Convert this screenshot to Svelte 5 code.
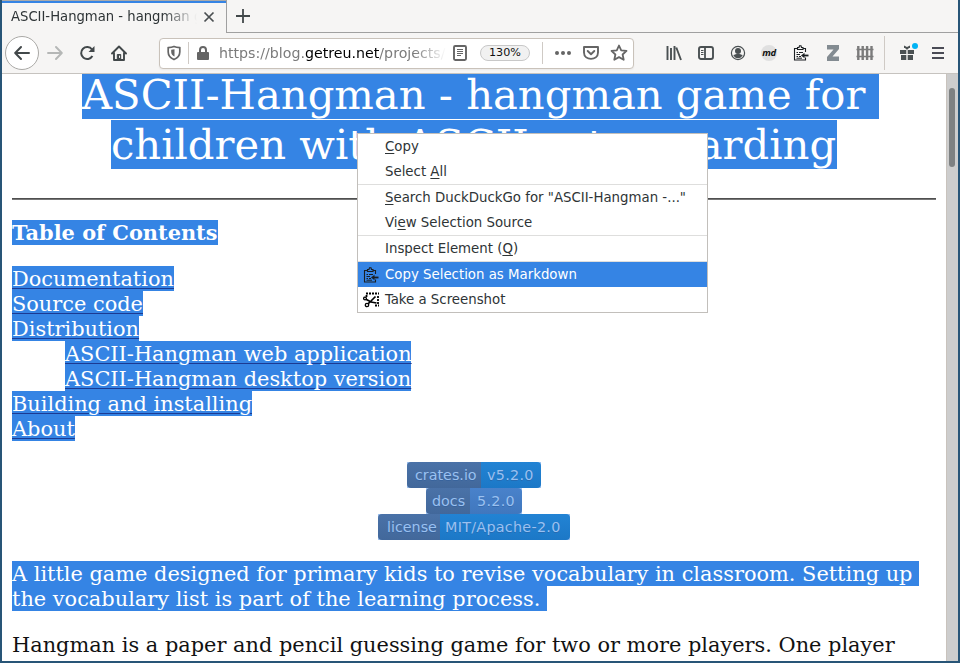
<script>
  const toc = [
    { text: 'Documentation', w: 162 },
    { text: 'Source code', w: 131 },
    { text: 'Distribution', w: 127 },
    { text: 'ASCII-Hangman web application', w: 346, sub: true },
    { text: 'ASCII-Hangman desktop version', w: 346, sub: true },
    { text: 'Building and installing', w: 240 },
    { text: 'About', w: 63 }
  ];
  const badges = [
    { left: 'crates.io', right: 'v5.2.0', lw: 74, rw: 60, kind: 'bright' },
    { left: 'docs', right: '5.2.0', lw: 44, rw: 52, kind: 'soft' },
    { left: 'license', right: 'MIT/Apache-2.0', lw: 62, rw: 130, kind: 'wide' }
  ];
</script>

{#snippet clipboard()}
  <svg width="16" height="16" viewBox="0 0 16 16" fill="none" stroke="#1b1f22" stroke-width="1.100">
    <path d="M12.500 7V3.500H10M4.500 3.500H1.500V15H12.500V12.500M4.500 4.500V2.500H6L6.500 .8H8L8.500 2.500H10V4.500Z" />
    <path d="M3.500 7.500H5M6 7.500H10M3.500 9.500H7M3.500 11.500H5M6 11.500H8M3.500 13.200H9" stroke-width="1" />
    <path d="M15.500 10.500H10" stroke-width="1.800" /><path d="M11.500 7.700L8 10.500L11.500 13.300Z" fill="#1b1f22" stroke="none" />
  </svg>
{/snippet}

<div class="window">
  <header>
    <div class="tabs">
      <div class="tab">
        <span class="title">ASCII-Hangman - hangman game for</span>
        <svg width="12" height="12" viewBox="0 0 12 12" stroke="#4a4f51" stroke-width="1.7"><path d="M1.500 1.500L10.500 10.500M10.500 1.500L1.500 10.500" /></svg>
      </div>
      <div class="rest">
        <svg width="14" height="14" viewBox="0 0 14 14" stroke="#42484a" stroke-width="1.800"><path d="M7 0V14M0 7H14" /></svg>
      </div>
    </div>

    <nav>
      <div class="back">
        <svg width="16" height="16" viewBox="0 0 16 16" fill="none" stroke="#42484a" stroke-width="2" stroke-linecap="round" stroke-linejoin="round"><path d="M15 8H1.500M7 2L1.200 8L7 14" /></svg>
      </div>
      <svg class="fwd" width="16" height="16" viewBox="0 0 16 16" fill="none" stroke="#b5b7b6" stroke-width="1.900" stroke-linecap="round" stroke-linejoin="round"><path d="M1 8H14.500M9 2L14.800 8L9 14" /></svg>
      <svg class="reload" width="16" height="16" viewBox="0 0 16 16" fill="none" stroke="#42484a" stroke-width="2"><path d="M13 4.500A6 6 0 1 0 13.400 11" /><path d="M15.500 1V7H9.500Z" fill="#42484a" stroke="none" /></svg>
      <svg class="home" width="16" height="16" viewBox="0 0 16 16" fill="none" stroke="#42484a" stroke-width="1.900" stroke-linejoin="round" stroke-linecap="round"><path d="M1 8.500L8 1.500L15 8.500M3 8V15H13V8" /><path d="M6.300 15V9.500H9.700V15" fill="#42484a" stroke-width="1" /><path d="M8.500 11V12.500" stroke="#f6f5f4" stroke-width="1" /></svg>

      <div class="url">
        <svg class="shield" width="14" height="16" viewBox="0 0 14 16"><path d="M7 1.500C9 2.200 11 2.500 12.800 2.700V7C12.800 10.500 10.500 13 7 14.500C3.500 13 1.200 10.500 1.200 7V2.700C3 2.500 5 2.200 7 1.500Z" fill="none" stroke="#656565" stroke-width="1.700" /><path d="M7.500 4.200L4.200 4.800V7C4.200 9 5.500 10.500 7.500 11.500Z" fill="#656565" /></svg>
        <i class="sep a"></i>
        <svg class="lock" width="14" height="16" viewBox="0 0 14 16"><rect x="1" y="7" width="12" height="8" rx="1" fill="#656565" /><path d="M4 8V5A3 3 0 0 1 10 5V8" fill="none" stroke="#656565" stroke-width="2" /></svg>
        <span class="address">https://blog.<b>getreu.net</b>/projects/ascii</span>
        <svg class="reader" width="14" height="16" viewBox="0 0 14 16" fill="none" stroke="#656565"><rect x="1" y="1" width="12" height="14" rx="1.200" stroke-width="1.900" /><path d="M4 4.500H10M4 6.500H10M4 8.500H10M4 10.500H8" /></svg>
        <span class="zoom">130%</span>
        <i class="sep b"></i>
        <svg class="dots" width="16" height="16" viewBox="0 0 16 16" fill="#656565"><circle cx="2" cy="8" r="2" /><circle cx="8" cy="8" r="2" /><circle cx="14" cy="8" r="2" /></svg>
        <svg class="pocket" width="16" height="16" viewBox="0 0 16 16" fill="none" stroke="#656565" stroke-width="1.900" stroke-linecap="round" stroke-linejoin="round"><path d="M1 2H15V7.500C15 16 1 16 1 7.500Z" /><path d="M4.700 6L8 9.200L11.300 6" /></svg>
        <svg class="star" width="18" height="18" viewBox="0 0 18 18" fill="none" stroke="#656565" stroke-width="1.800" stroke-linejoin="round"><path d="M9 1.500L11.200 6.300L16.500 6.900L12.600 10.500L13.700 15.800L9 13.100L4.300 15.800L5.400 10.500L1.500 6.900L6.800 6.300Z" /></svg>
      </div>

      <div class="tools">
        <svg class="lib" width="16" height="16" viewBox="0 0 16 16" fill="none" stroke="#4a5052" stroke-width="1.900"><path d="M1.500 1V15M5 3V15M8.500 1V15M10.300 2.500L15 15" /></svg>
        <svg class="side" width="16" height="16" viewBox="0 0 16 16" fill="none" stroke="#4a5052"><rect x="1" y="2" width="14" height="12" rx="2" stroke-width="1.900" /><path d="M7 2V14" stroke-width="1.800" /><path d="M3 5.500H5.500M3 7.500H5.500M3 9.500H5.500" /></svg>
        <svg class="acct" width="16" height="16" viewBox="0 0 16 16"><circle cx="8" cy="8" r="6.600" fill="none" stroke="#4a5052" stroke-width="1.200" /><circle cx="8" cy="6" r="3" fill="#4a5052" /><path d="M3.300 10C5 9.600 6 9 8 9S11 9.600 12.700 10C12 12 10 13.300 8 13.300S4 12 3.300 10Z" fill="#4a5052" /></svg>
        <span class="md">md</span>
        <span class="clip">{@render clipboard()}</span>
        <svg class="zed" width="14" height="16" viewBox="0 0 14 16"><path d="M1 0H13V4L6.500 11.500H13V16H1V12L7.500 4.500H1Z" fill="#838b91" /></svg>
        <svg class="fence" width="18" height="16" viewBox="0 0 18 16" fill="none" stroke="#7b7b7b" stroke-width="2.400"><path d="M2.300 1V15M6.700 1V15M11.100 1V15M15.500 1V15" /><path d="M.5 4.500H17.500M.5 11.500H17.500" stroke-width="1.500" /></svg>
        <i class="sep c"></i>
        <svg class="gift" width="20" height="20" viewBox="0 0 20 20"><path d="M2 8H8.300V12H2ZM9.700 8H16V12H9.700ZM3 13H8.300V18H3ZM9.700 13H15V18H9.700ZM6 3.500L9 5L12 3.500V6H11L9.500 7.500H8.500L7 6H6Z" fill="#4a5052" /><circle cx="17" cy="4" r="3" fill="#00b3f4" /></svg>
        <svg class="burger" width="12" height="14" viewBox="0 0 12 14" stroke="#4a4b55" stroke-width="2"><path d="M0 2H12M0 7H12M0 12H12" /></svg>
      </div>
    </nav>
  </header>

  <div class="view">
    <main>
      <h1><span class="l1">ASCII-Hangman - hangman game for </span><span class="l2">children with ASCII-art rewarding</span></h1>
      <hr />
      <h2><span>Table of Contents</span></h2>
      <ul>
        {#each toc as t}
          <li class:sub={t.sub}><a href="#top" style:width="{t.w}px">{t.text}</a></li>
        {/each}
      </ul>
      <div class="badges">
        {#each badges as b}
          <div class="badge {b.kind}"><div class="pill"><span class="bl" style:width="{b.lw}px">{b.left}</span><span class="br" style:width="{b.rw}px">{b.right}</span></div></div>
        {/each}
      </div>
      <p class="sel"><span class="s1">A little game designed for primary kids to revise vocabulary in classroom. Setting up</span><span class="s2">the vocabulary list is part of the learning process.</span></p>
      <p class="plain">Hangman is a paper and pencil guessing game for two or more players. One player</p>
    </main>
    <div class="scroll"><div class="thumb"></div></div>
  </div>

  <div class="menu">
    <div class="item"><span><u>C</u>opy</span></div>
    <div class="item"><span>Select <u>A</u>ll</span></div>
    <div class="line"></div>
    <div class="item"><span><u>S</u>earch DuckDuckGo for "ASCII-Hangman -..."</span></div>
    <div class="item"><span>Vi<u>e</u>w Selection Source</span></div>
    <div class="line"></div>
    <div class="item"><span>Inspect Element (<u>Q</u>)</span></div>
    <div class="line"></div>
    <div class="item on"><i class="ico">{@render clipboard()}</i><span>Copy Selection as Markdown</span></div>
    <div class="item"><i class="ico">
      <svg width="17" height="16" viewBox="0 0 17 16" fill="none" stroke="#000"><path d="M3 1.500H16" stroke-width="1.800" stroke-dasharray="2 1" /><path d="M15 4V13M12 13.500H16M3.500 3V5" stroke-width="1.800" stroke-dasharray="2 1" /><circle cx="2" cy="6.500" r="1.400" stroke-width="1.300" /><circle cx="4" cy="13" r="1.700" stroke-width="1.300" /><path d="M3 7.200L8 10L13.500 11M5 11.800L8 9L12.500 4.500" stroke-width="1.700" /></svg>
    </i><span>Take a Screenshot</span></div>
  </div>
</div>

<style>
  :global(body) { margin: 0; }
  * { box-sizing: border-box; }
  svg { display: block; flex: none; }
  .window { position: relative; width: 960px; height: 663px; overflow: hidden; border: 2px solid #285577; border-top: 0; background: #fff; font-family: 'DejaVu Sans', sans-serif; display: flex; flex-direction: column; }
  header { height: 74px; flex: none; background: #f6f5f4; border-bottom: 1px solid #c6c3bf; }
  .tabs { display: flex; height: 33px; }
  .tab { width: 224px; border-top: 1px solid #aaa; box-shadow: inset 0 2px #3584e4; padding: 0 11px 0 9px; display: flex; align-items: center; justify-content: space-between; }
  .title { width: 186px; overflow: hidden; white-space: nowrap; font-size: 14.670px; font-stretch: condensed; line-height: 20px; margin-top: -2px; color: #2e3436; -webkit-mask-image: linear-gradient(to right, #000 152px, transparent 186px); mask-image: linear-gradient(to right, #000 152px, transparent 186px); }
  .rest { flex: 1; border-left: 1px solid #a0a0a0; border-bottom: 1px solid #a0a0a0; padding: 9px 0 0 9px; }
  nav { display: flex; align-items: center; height: 40px; }
  .back { width: 34px; height: 34px; border: 1px solid #aaa9a6; border-radius: 50%; background: #fff; margin-left: 3px; display: flex; align-items: center; justify-content: center; }
  .fwd { margin-left: 8px; }
  .reload, .home { margin-left: 16px; }
  .url { width: 475px; height: 31px; margin-left: 32px; border: 1px solid #c9c2ba; border-radius: 4px; background: #fff; display: flex; align-items: center; box-shadow: 0 1px 2px #0000000d; }
  .shield { margin-left: 7px; }
  .sep { width: 1px; background: #cfcac5; height: 22px; flex: none; }
  .a { margin-left: 7px; }
  .lock { margin-left: 7px; }
  .address { margin-left: 9px; width: 227px; overflow: hidden; white-space: nowrap; color: #7b7b7b; font-size: 14.200px; line-height: 22px; flex: none; -webkit-mask-image: linear-gradient(to right, #000 195px, transparent 227px); mask-image: linear-gradient(to right, #000 195px, transparent 227px); }
  .address b { font-weight: 400; color: #000; }
  .reader { margin-left: 7px; }
  .zoom { width: 50px; height: 16px; margin-left: 13px; border: 1px solid #c8c8c8; border-radius: 8px; background: #f1f1f1; color: #111; font: 11.200px/14px 'DejaVu Sans', sans-serif; text-align: center; }
  .b { margin-left: 12px; }
  .dots { margin-left: 12px; }
  .pocket { margin-left: 12px; }
  .star { margin-left: 11px; }
  .tools { display: flex; align-items: center; flex: 1; height: 40px; padding-left: 32px; }
  .side, .acct { margin-left: 16px; }
  .md { width: 16px; height: 16px; margin-left: 15px; border-radius: 50%; background: #e0e0e0; color: #111; font: italic bold 9.500px/15px 'Open Sans', sans-serif; display: flex; justify-content: center; letter-spacing: -.4px; }
  .clip { margin-left: 16px; }
  .zed { margin-left: 17px; }
  .fence { margin-left: 16px; }
  .c { height: 34px; margin-left: 10px; }
  .gift { margin-left: 13px; margin-top: -3px; }
  .burger { margin-left: 14px; }

  .view { display: flex; flex: 1; min-height: 0; }
  main { flex: 1; padding: 0 10px; overflow: hidden; font-family: 'DejaVu Serif', serif; font-size: 20.880px; line-height: 27px; color: #111; }
  h1 { margin: -4px 0 0; height: 99px; font-weight: 400; font-size: 41.700px; color: #fff; display: flex; flex-direction: column; gap: 1px; white-space: pre; }
  h1 span { background: #3584e4; height: 49px; line-height: 49px; display: block; }
  .l1 { width: 797px; margin-left: 70px; }
  .l2 { width: 726px; margin-left: 99px; }
  hr { margin: 29px 0 20px; border: 0; height: 2px; border-top: 1px solid #4f4f4f; background: #777; width: 924px; }
  h2 { margin: 0; font-size: 20.880px; line-height: 25px; height: 25px; white-space: nowrap; }
  h2 span { display: block; width: 206px; background: #3584e4; color: #fff; }
  ul { list-style: none; margin: 21px 0; padding: 0; white-space: nowrap; }
  li { height: 25px; }
  li.sub { padding-left: 53px; }
  a { display: block; height: 25px; background: #3584e4; color: #fff; text-decoration: underline #1c3a92 1px; text-underline-offset: 2px; }
  .badges { display: flex; flex-direction: column; align-items: center; white-space: nowrap; width: 924px; }
  .badge { height: 26px; background: #a0c3f0; }
  .pill { display: flex; height: 26px; border-radius: 4px; overflow: hidden; font: 14.300px/26px 'DejaVu Sans', sans-serif; color: #9ac1f1; text-shadow: 0 1px #2b5b9a80; }
  .bl { background: linear-gradient(#4a72a8, #42689b); padding-left: 8px; }
  .br { background: linear-gradient(#2283d4, #1c78c7); padding-left: 6px; letter-spacing: .3px; }
  .wide .bl { padding-left: 9px; }
  .wide .br { padding-left: 5px; }
  .soft .bl { padding-left: 6px; }
  .soft .br { background: linear-gradient(#4982cb, #4077be); padding-left: 7px; }
  p { margin: 0; white-space: nowrap; }
  .sel { margin-top: 21px; color: #fff; }
  .sel span { display: block; height: 25px; background: #3584e4; }
  .s1 { width: 907px; }
  .s2 { width: 535px; }
  .plain { margin-top: 21px; }
  .scroll { width: 12px; background: #cdcdcd; border-left: 1px solid #c9c3bd; padding: 14px 3px 0 2px; }
  .thumb { width: 6px; height: 79px; border-radius: 3px; background: #7e8182; }

  .menu { position: absolute; left: 355px; top: 133px; width: 351px; height: 180px; border: 1px solid #c2bfbb; background: #fff; color: #2e3436; font-size: 14.820px; font-stretch: condensed; }
  .item { height: 25px; line-height: 24px; padding-left: 27px; white-space: nowrap; position: relative; }
  .line { height: 1px; background: #dededd; }
  .on { background: #3584e4; color: #fff; }
  .ico { position: absolute; left: 5px; top: 5px; }
  u { text-underline-offset: 2px; text-decoration-thickness: 1px; }
</style>
